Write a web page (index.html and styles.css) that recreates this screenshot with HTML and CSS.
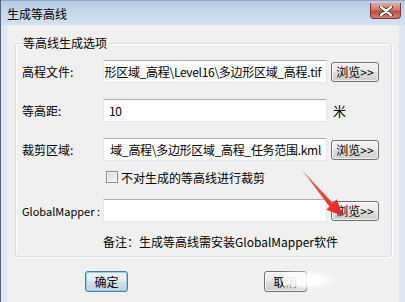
FILE: index.html
```html
<!DOCTYPE html>
<html lang="zh-CN">
<head>
    <meta charset="UTF-8">
    <title>生成等高线</title>
    <link rel="stylesheet" href="styles.css">
</head>
<body>
    <div class="window">
        <div class="titlebar">
            <span class="title">生成等高线</span>
            <span class="close-btn">
                <svg width="14" height="10" viewBox="0 0 14 10">
                    <path d="M2 1 L12 9 M12 1 L2 9" stroke="#4a1c18" stroke-width="4" stroke-linecap="round"/>
                    <path d="M2 1 L12 9 M12 1 L2 9" stroke="#ffffff" stroke-width="2.4" stroke-linecap="round"/>
                </svg>
            </span>
        </div>
        <div class="frame">
            <div class="client">
                <fieldset class="group">
                    <legend>等高线生成选项</legend>

                    <div class="row first">
                        <span class="label">高程文件:</span>
                        <div class="field"><span>形区域_高程\Level16\多边形区域_高程.tif</span></div>
                        <span class="btn browse">浏览&gt;&gt;</span>
                    </div>

                    <div class="row">
                        <span class="label">等高距:</span>
                        <div class="field left"><span>10</span></div>
                        <span class="unit">米</span>
                    </div>

                    <div class="row">
                        <span class="label">裁剪区域:</span>
                        <div class="field"><span>域_高程\多边形区域_高程_任务范围.kml</span></div>
                        <span class="btn browse">浏览&gt;&gt;</span>
                    </div>

                    <div class="check-row">
                        <span class="checkbox"></span>
                        <span>不对生成的等高线进行裁剪</span>
                    </div>

                    <div class="row gm">
                        <span class="label latin">GlobalMapper :</span>
                        <div class="field left"><span></span></div>
                        <span class="btn browse">浏览&gt;&gt;</span>
                    </div>

                    <div class="note">备注：生成等高线需安装GlobalMapper软件</div>
                </fieldset>

                <div class="actions">
                    <span class="btn default">确定</span>
                    <span class="btn">取消</span>
                </div>
            </div>
        </div>

        <div class="smear"></div>
        <svg class="arrow" width="405" height="302" viewBox="0 0 405 302">
            <defs>
                <linearGradient id="red" x1="0" y1="0" x2="1" y2="1">
                    <stop offset="0" stop-color="#f06a5a"/>
                    <stop offset="1" stop-color="#e3231c"/>
                </linearGradient>
            </defs>
            <polygon points="302,170 332.6,203 336.8,199.2 343,216 326.4,209.8 329.4,206.4" fill="url(#red)"/>
        </svg>
    </div>
</body>
</html>
```

FILE: styles.css
```css
body {
    margin: 0;
    font-family: "Noto Sans CJK SC", "Noto Sans", sans-serif;
    font-size: 12px;
    color: #000;
    background: #f0f0f0;
}

.window {
    position: relative;
    width: 405px;
    height: 302px;
    overflow: hidden;
    background: #dfe8f2;
    border-left: 1px solid #54667a;
    box-sizing: border-box;
}

.titlebar {
    height: 25px;
    display: flex;
    align-items: center;
    justify-content: space-between;
    padding: 0 4px 0 6px;
    background: linear-gradient(180deg, #b7cde6 0%, #c5d8ec 50%, #d3e2f1 100%);
    border-top: 1px solid #8ea6c0;
    box-sizing: border-box;
}

.title {
    line-height: 16px;
    margin-top: 1px;
}

.close-btn {
    width: 31px;
    height: 16px;
    margin-top: -4px;
    display: flex;
    align-items: center;
    justify-content: center;
    border: 1px solid #7a3a34;
    border-top: none;
    border-radius: 0 0 4px 4px;
    background: linear-gradient(180deg, #e4a99f 0%, #d27a6c 45%, #c14a3b 55%, #d2806f 100%);
    box-sizing: border-box;
}

.frame {
    padding: 0 6px 0 6px;
}

.client {
    background: #f0f0f0;
    height: 277px;
    overflow: hidden;
}

.group {
    margin: 10px 7px 0 8px;
    padding: 0 6px 6px 6px;
    border: 1px solid #d5dfe5;
    border-radius: 3px;
    box-shadow: inset 1px 1px 0 #ffffff, 1px 1px 0 #ffffff;
}

.group legend {
    padding: 0 1px;
    line-height: 16px;
}

.row {
    display: flex;
    align-items: center;
    height: 23px;
    margin-top: 16px;
}

.row.first {
    margin-top: 9px;
}

.row.gm {
    margin-top: 13px;
}

.label {
    width: 81px;
    flex-shrink: 0;
    line-height: 16px;
}

.label.latin {
    font-size: 11px;
}

.field {
    width: 224px;
    height: 23px;
    flex-shrink: 0;
    display: flex;
    align-items: center;
    justify-content: flex-end;
    overflow: hidden;
    white-space: nowrap;
    padding: 0 5px 0 3px;
    letter-spacing: -0.3px;
    background: #fff;
    border: 1px solid #e2e8ee;
    border-top-color: #abadb3;
    box-sizing: border-box;
}

.field.left {
    justify-content: flex-start;
    padding-left: 5px;
}

.unit {
    margin-left: 6px;
    font-size: 13px;
}

.btn {
    display: inline-flex;
    align-items: center;
    justify-content: center;
    width: 48px;
    height: 20px;
    border: 1px solid #707070;
    border-radius: 3px;
    background: linear-gradient(180deg, #f2f2f2 0%, #ebebeb 48%, #dddddd 52%, #cfcfcf 100%);
    box-shadow: inset 0 0 0 1px rgba(255, 255, 255, 0.7);
    box-sizing: border-box;
    line-height: 14px;
}

.browse {
    margin-left: 4px;
    margin-top: 1px;
}

.check-row {
    display: flex;
    align-items: center;
    height: 18px;
    margin: 7px 0 0 84px;
}

.checkbox {
    width: 12px;
    height: 12px;
    margin-right: 3px;
    border: 1px solid #8e8f8f;
    background: linear-gradient(135deg, #dcdcdc, #f6f6f6);
    box-shadow: inset 0 0 0 1px #f4f4f4;
    box-sizing: border-box;
}

.note {
    margin: 12px 0 0 81px;
    line-height: 16px;
}

.actions {
    display: flex;
    gap: 136px;
    padding-left: 78px;
    margin-top: 14px;
}

.actions .btn {
    width: 43px;
    height: 21px;
}

.actions .default {
    border-color: #3c7fb1;
    background: linear-gradient(180deg, #eef4f8 0%, #e2ebf1 48%, #d2dee7 52%, #c4d3de 100%);
    box-shadow: inset 0 0 0 1px #98cdeb;
}

.smear {
    position: absolute;
    left: 282px;
    top: 270px;
    width: 56px;
    height: 20px;
    background: radial-gradient(ellipse at 35% 50%, rgba(255, 255, 255, 0.97) 0%, rgba(255, 255, 255, 0.85) 40%, rgba(255, 255, 255, 0) 72%);
    pointer-events: none;
}

.arrow {
    position: absolute;
    left: -1px;
    top: 0;
    pointer-events: none;
}
```
